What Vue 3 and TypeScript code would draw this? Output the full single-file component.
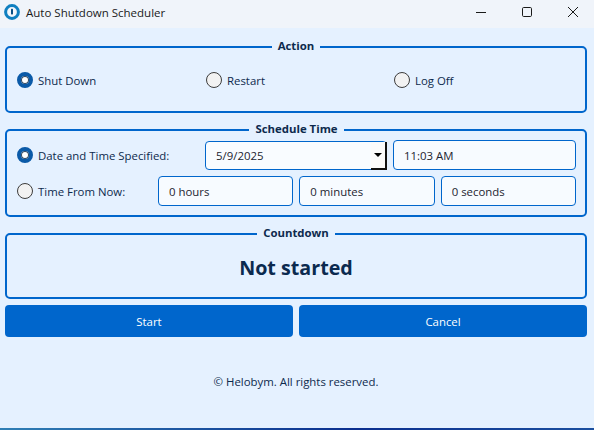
<template>
  <div class="window">
    <div class="title-bar">
      <svg class="app-icon" width="16" height="16" viewBox="0 0 16 16">
        <circle cx="8" cy="8" r="6.4" fill="none" stroke="#0f7fc0" stroke-width="3" />
        <circle cx="8" cy="8" r="3.6" fill="#f4f8fc" />
        <rect x="7" y="4.8" width="2" height="5.6" rx="0.6" fill="#0b4f86" />
      </svg>
      <span class="title-text">Auto Shutdown Scheduler</span>
      <div class="window-controls">
        <svg width="12" height="12" viewBox="0 0 12 12" class="ctl ctl-min"><path d="M1 6.5h10" stroke="#1a1a1a" stroke-width="1" /></svg>
        <svg width="12" height="12" viewBox="0 0 12 12" class="ctl ctl-max"><rect x="1.5" y="1.5" width="9" height="9" rx="1.2" fill="none" stroke="#1a1a1a" /></svg>
        <svg width="12" height="12" viewBox="0 0 12 12" class="ctl ctl-close"><path d="M1 1l10 10M11 1L1 11" stroke="#1a1a1a" stroke-width="1" /></svg>
      </div>
    </div>

    <div class="content">
      <fieldset class="group group-action">
        <legend>Action</legend>
        <div class="action-row">
          <label v-for="option in actions" :key="option" class="radio-item">
            <span class="radio" :class="{ checked: option === selectedAction }"></span>
            {{ option }}
          </label>
        </div>
      </fieldset>

      <fieldset class="group group-schedule">
        <legend>Schedule Time</legend>
        <div class="schedule-row first">
          <label class="radio-item date-label">
            <span class="radio checked"></span>
            Date and Time Specified:
          </label>
          <div class="field date-field">
            <span>5/9/2025</span>
            <span class="drop-btn"><i class="arrow"></i></span>
          </div>
          <div class="field time-field">11:03 AM</div>
        </div>
        <div class="schedule-row second">
          <label class="radio-item from-label">
            <span class="radio"></span>
            Time From Now:
          </label>
          <div v-for="part in durationParts" :key="part" class="field part-field">{{ part }}</div>
        </div>
      </fieldset>

      <fieldset class="group group-countdown">
        <legend>Countdown</legend>
        <div class="countdown-text">Not started</div>
      </fieldset>

      <div class="buttons">
        <button class="btn">Start</button>
        <button class="btn">Cancel</button>
      </div>

      <p class="footer">© Helobym. All rights reserved.</p>
    </div>
    <div class="taskbar-strip"></div>
  </div>
</template>

<script setup lang="ts">
const actions: string[] = ['Shut Down', 'Restart', 'Log Off']
const selectedAction = 'Shut Down'
const durationParts: string[] = ['0 hours', '0 minutes', '0 seconds']
</script>

<style>
html, body {
  margin: 0;
  background: #e5f1ff;
}
</style>

<style scoped>
.window {
  width: 594px;
  height: 430px;
  display: flex;
  flex-direction: column;
  background: #e5f1ff;
  color: #0d2a4d;
  font-family: "Open Sans", "Noto Sans", sans-serif;
  font-size: 11.4px;
  overflow: hidden;
}

.title-bar {
  height: 28px;
  flex: none;
  box-sizing: border-box;
  display: flex;
  align-items: center;
  padding: 0 0 4px 4px;
  background: #f0f4fa;
  color: #1a1a1a;
}

.app-icon {
  margin-right: 6px;
}

.title-text {
  font-size: 11.5px;
}

.window-controls {
  margin-left: auto;
  display: flex;
  align-items: center;
  padding-right: 15px;
  gap: 34px;
}

.ctl {
  display: block;
}

.content {
  flex: 1;
  display: flex;
  flex-direction: column;
  padding: 0 7px 0 5px;
}

.group {
  margin: 11px 0 0;
  padding: 0;
  border: 2px solid #0066cc;
  border-radius: 5px;
  min-width: 0;
}

.group + .group {
  margin-top: 9px;
}

.group legend {
  margin: 0 auto;
  padding: 0 6px;
  font-size: 11.4px;
  line-height: 16px;
  font-weight: 700;
  color: #0d2a4d;
  transform: translateY(-1px);
}

.group-action {
  height: 74px;
  box-sizing: border-box;
}

.action-row {
  display: grid;
  grid-template-columns: 189px 188px 1fr;
  padding: 17px 0 0 10px;
}

.radio-item {
  display: flex;
  align-items: center;
  gap: 5px;
  white-space: nowrap;
}

.radio {
  width: 16px;
  height: 16px;
  flex: none;
  box-sizing: border-box;
  border: 1px solid #3c3c3c;
  border-radius: 50%;
  background: #f2f2f2;
}

.radio.checked {
  border: 4px solid #0a5aa8;
  background: #fff;
  box-shadow: 0 0 0 1px #33475c inset;
}

.group-schedule {
  height: 95px;
  box-sizing: border-box;
  padding: 0 9px 0 10px;
}

.schedule-row {
  display: flex;
  align-items: center;
  gap: 6px;
}

.schedule-row.first {
  height: 30px;
  margin-top: 2px;
}

.schedule-row.second {
  height: 30px;
  margin-top: 6px;
}

.date-label {
  width: 182px;
  flex: none;
}

.from-label {
  width: 135px;
  flex: none;
}

.field {
  box-sizing: border-box;
  height: 30px;
  display: flex;
  align-items: center;
  padding-left: 10px;
  border: 1px solid #0066cc;
  border-radius: 4px;
  background: #f7fbff;
  color: #1c2430;
}

.date-field {
  width: 182px;
  flex: none;
  height: 29px;
  position: relative;
  background: #f9fcff;
}

.drop-btn {
  position: absolute;
  top: 0;
  right: -1px;
  bottom: -1px;
  width: 16px;
  border-right: 2px solid #111;
  border-bottom: 2px solid #111;
  box-sizing: border-box;
  background: #fbfbfb;
  display: flex;
  align-items: center;
  justify-content: center;
}

.arrow {
  width: 0;
  height: 0;
  border-left: 4px solid transparent;
  border-right: 4px solid transparent;
  border-top: 4px solid #000;
}

.time-field {
  flex: 1;
}

.part-field {
  flex: 1;
}

.group-countdown {
  height: 73px;
  box-sizing: border-box;
}

.countdown-text {
  text-align: center;
  font-size: 19.7px;
  font-weight: 700;
  line-height: 28px;
  margin-top: 12px;
  color: #0b2a4f;
}

.buttons {
  display: grid;
  grid-template-columns: 1fr 1fr;
  gap: 6px;
  margin-top: 6px;
}

.btn {
  height: 32px;
  border: none;
  border-radius: 4px;
  background: #0066cc;
  color: #fff;
  font: inherit;
}

.footer {
  margin: 37px 0 0;
  text-align: center;
  line-height: 16px;
  color: #0d2a4d;
}

.taskbar-strip {
  height: 2px;
  flex: none;
  background: linear-gradient(90deg, #2f7fb5, #0b2f8f 60%, #1b4f9f);
}
</style>
